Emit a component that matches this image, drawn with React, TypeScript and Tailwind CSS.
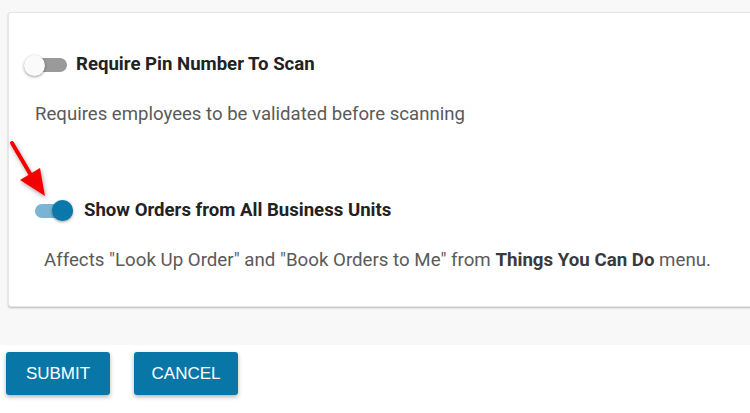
import React from "react";

function Toggle({ on }: { on: boolean }) {
  return (
    <div className="relative w-[40px] h-[22px] flex items-center shrink-0">
      <div className={`w-[38px] h-[14px] rounded-full ml-[2px] ${on ? "bg-[#7ab4d2]" : "bg-[#9a9a9a]"}`} />
      <div
        className={`absolute w-[21px] h-[21px] rounded-full shadow-[0_1px_3px_rgba(0,0,0,0.4)] ${
          on ? "left-[19px] top-[0px] bg-[#0b78ab]" : "left-[-3px] top-[1px] bg-[#fafafa]"
        }`}
      />
    </div>
  );
}

export default function App() {
  return (
    <div className="relative w-[750px] h-[413px] overflow-hidden bg-white font-['Roboto',sans-serif]">
      <div className="bg-[#f8f8f8] h-[345px] pt-[12px] pl-[8px]">
        <div className="w-[800px] h-[295px] bg-white border border-[#e6e6e6] rounded-[3px] shadow-[0_1px_2px_rgba(0,0,0,0.25)] pt-[40px]">
          {/* Pin setting */}
          <div className="flex items-center h-[24px] pl-[18px] gap-[9px]">
            <Toggle on={false} />
            <span className="text-[18.6px] font-bold text-[#222]">Require Pin Number To Scan</span>
          </div>
          <p className="mt-[25px] pl-[26px] text-[18.6px] leading-[24px] text-[#5a5a5a]">
            Requires employees to be validated before scanning
          </p>

          {/* Business units setting */}
          <div className="mt-[73px] flex items-center h-[24px] pl-[24px] gap-[11px]">
            <Toggle on={true} />
            <span className="text-[18.6px] font-bold text-[#222]">Show Orders from All Business Units</span>
          </div>
          <p className="mt-[25px] pl-[35px] text-[18.7px] leading-[24px] text-[#5a5a5a]">
            Affects "Look Up Order" and "Book Orders to Me" from{" "}
            <span className="font-bold text-[#3a3a3a]">Things You Can Do</span> menu.
          </p>
        </div>
      </div>

      <div className="flex gap-[24px] pl-[6px] pt-[7px] font-['Liberation_Sans',Arial,sans-serif]">
        <button className="w-[104px] h-[43px] rounded-[3px] bg-[#0877a8] text-white text-[17px] shadow-[0_2px_4px_rgba(0,0,0,0.3)]">
          SUBMIT
        </button>
        <button className="w-[104px] h-[43px] rounded-[3px] bg-[#0877a8] text-white text-[17px] shadow-[0_2px_4px_rgba(0,0,0,0.3)]">
          CANCEL
        </button>
      </div>

      {/* annotation arrow */}
      <svg className="absolute left-0 top-[135px]" width="60" height="70" viewBox="0 0 60 70">
        <defs>
          <filter id="sh" x="-50%" y="-50%" width="200%" height="200%">
            <feDropShadow dx="1" dy="2" stdDeviation="2" floodColor="#000" floodOpacity="0.35" />
          </filter>
        </defs>
        <g filter="url(#sh)">
          <line x1="12" y1="8" x2="32" y2="42" stroke="#f40000" strokeWidth="4" strokeLinecap="round" />
          <polygon points="45,61 20,45 40,33" fill="#f40000" />
        </g>
      </svg>
    </div>
  );
}
